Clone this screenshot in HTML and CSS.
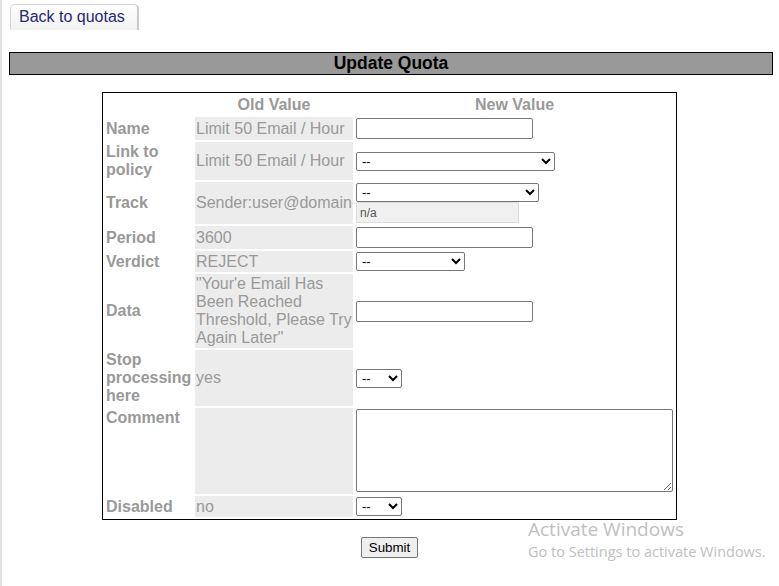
FILE: index.html
```html
<!DOCTYPE html>
<html>
<head>
<meta charset="utf-8">
<title>Update Quota</title>
<link rel="stylesheet" href="styles.css">
</head>
<body>
<div class="edge"></div>
<div class="page">
  <ul class="tabs">
    <li class="tab"><a href="#">Back to quotas</a></li>
  </ul>
  <div class="title-bar">Update Quota</div>
  <form class="quota-form">
    <table class="quota-table">
      <colgroup>
        <col class="c-label">
        <col class="c-old">
        <col class="c-new">
      </colgroup>
      <tr>
        <th></th>
        <th class="col-head">Old Value</th>
        <th class="col-head">New Value</th>
      </tr>
      <tr>
        <td class="label">Name</td>
        <td class="old">Limit 50 Email / Hour</td>
        <td class="new"><input class="txt" type="text"></td>
      </tr>
      <tr>
        <td class="label">Link to policy</td>
        <td class="old">Limit 50 Email / Hour</td>
        <td class="new"><select class="sel sel-policy"><option>--</option></select></td>
      </tr>
      <tr>
        <td class="label">Track</td>
        <td class="old">Sender:user@domain</td>
        <td class="new"><select class="sel sel-track"><option>--</option></select><input class="na" type="text" value="n/a" disabled></td>
      </tr>
      <tr>
        <td class="label">Period</td>
        <td class="old">3600</td>
        <td class="new"><input class="txt" type="text"></td>
      </tr>
      <tr>
        <td class="label">Verdict</td>
        <td class="old">REJECT</td>
        <td class="new"><select class="sel sel-verdict"><option>--</option></select></td>
      </tr>
      <tr>
        <td class="label">Data</td>
        <td class="old">"Your'e Email Has Been Reached Threshold, Please Try Again Later"</td>
        <td class="new"><input class="txt" type="text"></td>
      </tr>
      <tr>
        <td class="label">Stop processing here</td>
        <td class="old">yes</td>
        <td class="new"><select class="sel sel-small"><option>--</option></select></td>
      </tr>
      <tr>
        <td class="label top">Comment</td>
        <td class="old"></td>
        <td class="new"><textarea class="comment"></textarea></td>
      </tr>
      <tr>
        <td class="label">Disabled</td>
        <td class="old">no</td>
        <td class="new"><select class="sel sel-small"><option>--</option></select></td>
      </tr>
    </table>
    <div class="actions"><button type="button" class="submit">Submit</button></div>
  </form>
</div>
<div class="watermark">
  <div class="wm-title">Activate Windows</div>
  <div class="wm-sub">Go to Settings to activate Windows.</div>
</div>
</body>
</html>
```
FILE: styles.css
```css
html, body {
  margin: 0;
  padding: 0;
  background: #fff;
}
body {
  font-family: "Liberation Sans", Arial, sans-serif;
  font-size: 16px;
  color: #000;
  min-height: 586px;
  box-sizing: border-box;
  border-left: 2px solid #e4e4e4;
  position: relative;
}
.edge {
  position: absolute;
  left: -2px;
  top: 0;
  width: 2px;
  height: 20px;
  background: #707070;
}
.page {
  padding: 4px 6px 0 7px;
}
.tabs {
  list-style: none;
  margin: 0;
  padding: 0 0 0 1px;
  display: flex;
}
.tab {
  height: 26px;
  width: 129px;
  box-sizing: border-box;
  border: 1px solid #d6d6d6;
  border-bottom: none;
  border-right: 2px solid #c9c9c9;
  border-radius: 5px 5px 0 0;
  background: linear-gradient(#ffffff, #f1f1f1);
  padding: 3px 0 0 8px;
}
.tab a {
  color: #1f2a7a;
  text-decoration: none;
  font-size: 16px;
}
.title-bar {
  margin-top: 22px;
  height: 23px;
  box-sizing: border-box;
  border: 1px solid #000;
  background: #999999;
  text-align: center;
  font-weight: bold;
  font-size: 17.5px;
  line-height: 20px;
}
.quota-form {
  margin-top: 17px;
}
.quota-table {
  margin: 0 0 0 93px;
  width: 575px;
  border: 1px solid #000;
  border-spacing: 2px;
  table-layout: fixed;
  color: #999;
}
.c-label { width: 88px; }
.c-old { width: 158px; }
.quota-table th,
.quota-table td {
  padding: 1px;
}
.col-head {
  font-weight: bold;
  text-align: center;
  line-height: 18px;
}
.label {
  font-weight: bold;
  vertical-align: middle;
  line-height: 18px;
}
.label.top {
  vertical-align: top;
}
.old {
  background: #ececec;
  line-height: 18px;
  vertical-align: middle;
}
.new {
  vertical-align: middle;
}
.txt {
  width: 177px;
  height: 21px;
  box-sizing: border-box;
  margin: 0;
  border: 1px solid #767676;
  border-radius: 2px;
  font-family: "Liberation Sans", Arial, sans-serif;
  font-size: 13px;
  padding: 1px 2px;
  display: block;
}
.sel {
  height: 19px;
  box-sizing: border-box;
  margin: 0;
  border: 1px solid #767676;
  border-radius: 2px;
  background: #fff;
  font-family: "Liberation Sans", Arial, sans-serif;
  font-size: 13px;
  color: #000;
  padding: 0 0 0 1px;
  display: block;
}
.sel-policy { width: 199px; }
.sel-track { width: 183px; }
.sel-verdict { width: 109px; }
.sel-small { width: 46px; }
.na {
  display: block;
  width: 163px;
  height: 21px;
  box-sizing: border-box;
  margin: 0;
  border: 1px solid #dcdcdc;
  background: #f0f0f0;
  color: #555;
  font-family: "Liberation Sans", Arial, sans-serif;
  font-size: 12px;
  padding: 2px 3px;
}
.comment {
  width: 317px;
  height: 83px;
  box-sizing: border-box;
  margin: 0 0 1px 0;
  border: 1px solid #767676;
  border-radius: 2px;
  display: block;
  resize: both;
  font-family: "Liberation Mono", monospace;
}
.actions {
  margin: 17px 0 0 93px;
  width: 575px;
  text-align: center;
}
.submit {
  font-family: "Liberation Sans", Arial, sans-serif;
  font-size: 13.33px;
  height: 21px;
  width: 57px;
  padding: 0;
  border: 1px solid #767676;
  border-radius: 2px;
  background: #efefef;
  color: #000;
  margin: 0;
}
.watermark {
  position: absolute;
  left: 526px;
  top: 516px;
  color: #c0c0c0;
  font-family: "Open Sans", "Noto Sans", sans-serif;
  pointer-events: none;
}
.wm-title {
  font-size: 19px;
  line-height: 26px;
}
.wm-sub {
  font-size: 14.5px;
  line-height: 20px;
}
```
